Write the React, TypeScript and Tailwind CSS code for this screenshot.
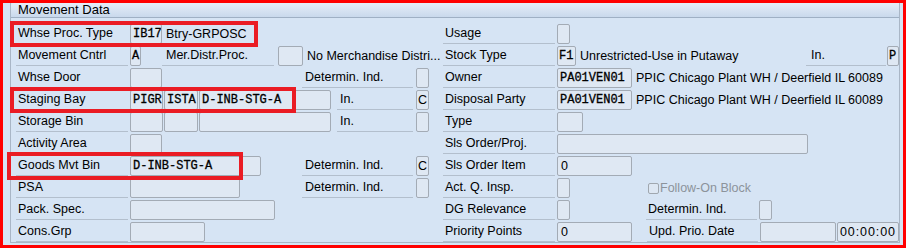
import React from 'react';

type P = { className?: string; children?: React.ReactNode };

function Label({ className = '', children }: P) {
  return (
    <div className={`h-[20px] shrink-0 border-b border-[#b3bfcd] pl-[2px] leading-[19px] whitespace-nowrap ${className}`}>
      {children}
    </div>
  );
}

function Box({ className = '', children, mono }: P & { mono?: boolean }) {
  return (
    <div
      className={`h-[20px] shrink-0 rounded-[2px] border border-[#a3abb5] bg-[#dfe8f3] px-[2px] leading-[18px] whitespace-nowrap overflow-hidden ${
        mono ? "font-['Liberation_Mono',monospace] text-[12px] [-webkit-text-stroke:0.3px_black]" : ''
      } ${className}`}
    >
      {children}
    </div>
  );
}

function Txt({ className = '', children }: P) {
  return <div className={`h-[20px] shrink-0 leading-[20px] whitespace-nowrap ${className}`}>{children}</div>;
}

function Row({ left, right }: { left: React.ReactNode; right: React.ReactNode }) {
  return (
    <div className="flex h-[20px]">
      <div className="flex w-[432px] shrink-0">{left}</div>
      <div className="flex flex-1">{right}</div>
    </div>
  );
}

export default function App() {
  return (
    <div className="relative h-[248px] w-[906px] border-[3px] border-[#ff0000] bg-[#d6e4f4] font-['Liberation_Sans',Arial,sans-serif] text-[12.5px] text-black">
      <div className="ml-[7px] h-[240px] w-[890px] border-x border-b border-[#a9b6c6]">
        {/* header */}
        <div className="h-[15px] rounded-tl-[3px] border-b border-[#9fb0c4] bg-gradient-to-b from-[#e6eef8] to-[#c9d9ec] pl-[7px] text-[13px] leading-[14px]">
          Movement Data
        </div>

        <div className="mt-[6px] flex flex-col gap-[2px]">
          <Row
            left={
              <>
                <Label className="ml-[5px] w-[112px]">Whse Proc. Type</Label>
                <Box mono className="ml-[2px] w-[32px]">IB17</Box>
                <Txt className="ml-[4px]">Btry-GRPOSC</Txt>
              </>
            }
            right={
              <>
                <Label className="w-[112px]">Usage</Label>
                <Box className="ml-[2px] w-[13px]" />
              </>
            }
          />
          <Row
            left={
              <>
                <Label className="ml-[5px] w-[112px]">Movement Cntrl</Label>
                <Box mono className="ml-[2px] w-[11px] !px-[1px]">A</Box>
                <Label className="ml-[21px] w-[112px] !pl-[4px]">Mer.Distr.Proc.</Label>
                <Box className="ml-[4px] w-[25px]" />
                <Txt className="ml-[4px]">No Merchandise Distri...</Txt>
              </>
            }
            right={
              <>
                <Label className="w-[112px]">Stock Type</Label>
                <Box mono className="ml-[2px] w-[19px] !px-[1px]">F1</Box>
                <Txt className="ml-[4px]">Unrestricted-Use in Putaway</Txt>
                <Label className="ml-auto w-[80px] !pl-[5px]">In.</Label>
                <Box mono className="ml-[1px] w-[12px] !px-[1px]">P</Box>
              </>
            }
          />
          <Row
            left={
              <>
                <Label className="ml-[5px] w-[112px]">Whse Door</Label>
                <Box className="ml-[2px] w-[32px]" />
                <Label className="ml-[140px] w-[111px] !pl-[3px]">Determin. Ind.</Label>
                <Box className="ml-[3px] w-[13px]" />
              </>
            }
            right={
              <>
                <Label className="w-[112px]">Owner</Label>
                <Box mono className="ml-[2px] w-[75px]">PA01VEN01</Box>
                <Txt className="ml-[4px]">PPIC Chicago Plant WH / Deerfield IL 60089</Txt>
              </>
            }
          />
          <Row
            left={
              <>
                <Label className="ml-[5px] w-[112px]">Staging Bay</Label>
                <Box mono className="ml-[2px] w-[33px]">PIGR</Box>
                <Box mono className="ml-[1px] w-[34px]">ISTA</Box>
                <Box mono className="ml-[1px] w-[132px]">D-INB-STG-A</Box>
                <Label className="ml-[6px] w-[76px] !pl-[3px]">In.</Label>
                <Box className="ml-[3px] w-[13px] !px-[1px]">C</Box>
              </>
            }
            right={
              <>
                <Label className="w-[112px]">Disposal Party</Label>
                <Box mono className="ml-[2px] w-[75px]">PA01VEN01</Box>
                <Txt className="ml-[4px]">PPIC Chicago Plant WH / Deerfield IL 60089</Txt>
              </>
            }
          />
          <Row
            left={
              <>
                <Label className="ml-[5px] w-[112px]">Storage Bin</Label>
                <Box className="ml-[2px] w-[33px]" />
                <Box className="ml-[1px] w-[34px]" />
                <Box className="ml-[1px] w-[132px]" />
                <Label className="ml-[6px] w-[76px] !pl-[3px]">In.</Label>
                <Box className="ml-[3px] w-[13px]" />
              </>
            }
            right={
              <>
                <Label className="w-[112px]">Type</Label>
                <Box className="ml-[2px] w-[26px]" />
              </>
            }
          />
          <Row
            left={
              <>
                <Label className="ml-[5px] w-[112px]">Activity Area</Label>
                <Box className="ml-[2px] w-[32px]" />
              </>
            }
            right={
              <>
                <Label className="w-[112px]">Sls Order/Proj.</Label>
                <Box className="ml-[2px] w-[251px]" />
              </>
            }
          />
          <Row
            left={
              <>
                <Label className="ml-[5px] w-[112px]">Goods Mvt Bin</Label>
                <Box mono className="ml-[2px] w-[131px]">D-INB-STG-A</Box>
                <Label className="ml-[41px] w-[111px] !pl-[3px]">Determin. Ind.</Label>
                <Box className="ml-[3px] w-[13px] !px-[1px]">C</Box>
              </>
            }
            right={
              <>
                <Label className="w-[112px]">Sls Order Item</Label>
                <Box className="ml-[2px] w-[75px] !px-[3px]">0</Box>
              </>
            }
          />
          <Row
            left={
              <>
                <Label className="ml-[5px] w-[112px]">PSA</Label>
                <Box className="ml-[2px] w-[110px]" />
                <Label className="ml-[62px] w-[111px] !pl-[3px]">Determin. Ind.</Label>
                <Box className="ml-[3px] w-[13px]" />
              </>
            }
            right={
              <>
                <Label className="w-[112px]">Act. Q. Insp.</Label>
                <Box className="ml-[2px] w-[13px]" />
                <div className="ml-[78px] flex h-[20px] items-center text-[#8c939b]">
                  <span className="h-[11px] w-[11px] rounded-[2px] border border-[#a0a7af] bg-[#dde7f3]" />
                  <span className="ml-[1px] leading-[20px]">Follow-On Block</span>
                </div>
              </>
            }
          />
          <Row
            left={
              <>
                <Label className="ml-[5px] w-[112px]">Pack. Spec.</Label>
                <Box className="ml-[2px] w-[145px]" />
              </>
            }
            right={
              <>
                <Label className="w-[112px]">DG Relevance</Label>
                <Box className="ml-[2px] w-[13px]" />
                <Label className="ml-[76px] w-[111px]">Determin. Ind.</Label>
                <Box className="ml-[2px] w-[13px]" />
              </>
            }
          />
          <Row
            left={
              <>
                <Label className="ml-[5px] w-[112px]">Cons.Grp</Label>
                <Box className="ml-[2px] w-[75px]" />
              </>
            }
            right={
              <>
                <Label className="w-[112px]">Priority Points</Label>
                <Box className="ml-[2px] w-[75px] !px-[3px]">0</Box>
                <Label className="ml-[15px] w-[111px]">Upd. Prio. Date</Label>
                <Box className="ml-[2px] w-[76px]" />
                <Box className="ml-[1px] w-[62px] tracking-[0.9px]">00:00:00</Box>
              </>
            }
          />
        </div>
      </div>

      {/* red annotation frames */}
      <div className="pointer-events-none absolute left-[7px] top-[18px] h-[26px] w-[248px] border-[4px] border-[#ea1c24]" />
      <div className="pointer-events-none absolute left-[7px] top-[84px] h-[26px] w-[286px] border-[4px] border-[#ea1c24]" />
      <div className="pointer-events-none absolute left-[4px] top-[149px] h-[28px] w-[236px] border-[4px] border-[#ea1c24]" />
    </div>
  );
}
